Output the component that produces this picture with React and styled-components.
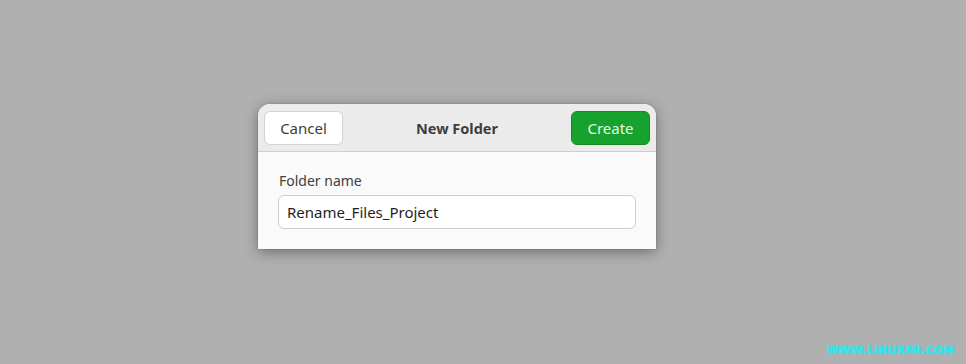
import React, { useState } from 'react';
import styled, { createGlobalStyle } from 'styled-components';

const GlobalStyle = createGlobalStyle`
    html, body {
        margin: 0;
        padding: 0;
        background: #b1b0b1;
    }
    body {
        font-family: "Noto Sans", "Open Sans", "DejaVu Sans", sans-serif;
        color: #3d3d3d;
    }
`;

const Screen = styled.div`
    position: relative;
    width: 966px;
    height: 364px;
    box-sizing: border-box;
    padding: 104px 0 0 258px;
    overflow: hidden;
`;

const Dialog = styled.div`
    width: 398px;
    border-radius: 12px 12px 0 0;
    background: #fafafa;
    box-shadow: 0 3px 14px rgba(0, 0, 0, 0.38), 0 0 0 1px rgba(0, 0, 0, 0.06);
    overflow: hidden;
`;

const HeaderBar = styled.div`
    display: grid;
    grid-template-columns: auto 1fr auto;
    align-items: center;
    height: 47px;
    padding: 0 6px;
    background: #ebebeb;
    border-bottom: 1px solid #cfcfcf;
`;

const Title = styled.h1`
    margin: 0;
    text-align: center;
    font-size: 14.5px;
    font-weight: 700;
    color: #3d3d3d;
`;

const Button = styled.button`
    width: 79px;
    height: 34px;
    border-radius: 6px;
    font-family: inherit;
    font-size: 15px;
    cursor: pointer;
    border: 1px solid ${p => (p.$primary ? '#138a26' : '#d3d3d3')};
    background: ${p => (p.$primary ? '#17a22d' : '#ffffff')};
    color: ${p => (p.$primary ? '#eaf6ea' : '#3d3d3d')};
`;

const Body = styled.div`
    display: flex;
    flex-direction: column;
    gap: 5px;
    padding: 20px;
`;

const Label = styled.label`
    font-size: 14px;
    line-height: 18px;
    padding-left: 1px;
    color: #3d3d3d;
`;

const Input = styled.input`
    box-sizing: border-box;
    width: 100%;
    height: 34px;
    padding: 0 8px;
    border: 1px solid #cdcdcd;
    border-radius: 6px;
    background: #ffffff;
    font-family: inherit;
    font-size: 15px;
    color: #1f1f1f;
    outline: none;
`;

const Watermark = styled.div`
    position: absolute;
    right: 11px;
    bottom: 7px;
    font-family: "DejaVu Sans", "Liberation Sans", sans-serif;
    font-weight: 700;
    font-size: 11px;
    letter-spacing: 0.2px;
    color: #2ee8ee;
    text-shadow: 0 0 2px rgba(40, 230, 240, 0.8);
`;

export default function App() {
    const [name, setName] = useState('Rename_Files_Project');

    return (
        <>
            <GlobalStyle />
            <Screen>
                <Dialog>
                    <HeaderBar>
                        <Button>Cancel</Button>
                        <Title>New Folder</Title>
                        <Button $primary>Create</Button>
                    </HeaderBar>
                    <Body>
                        <Label htmlFor="folder-name">Folder name</Label>
                        <Input id="folder-name" value={name} onChange={e => setName(e.target.value)} />
                    </Body>
                </Dialog>
                <Watermark>WWW.LINUXMI.COM</Watermark>
            </Screen>
        </>
    );
}
